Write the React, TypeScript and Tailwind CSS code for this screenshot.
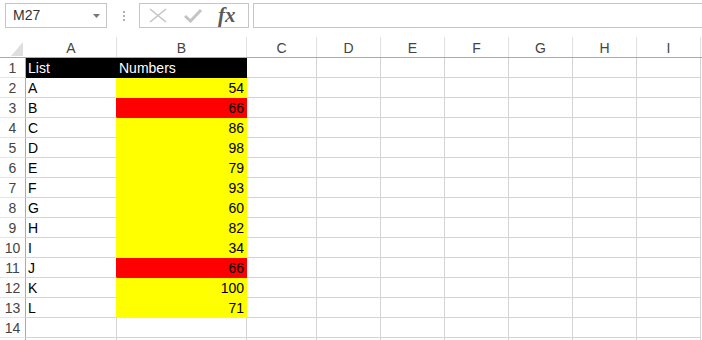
import React from 'react';
import clsx from 'clsx';

type Fill = 'none' | 'black' | 'yellow' | 'red';

const COLS = [
    { label: 'A', w: 'w-[91px]' },
    { label: 'B', w: 'w-[130px]' },
    { label: 'C', w: 'w-[70px]' },
    { label: 'D', w: 'w-[64px]' },
    { label: 'E', w: 'w-[64px]' },
    { label: 'F', w: 'w-[64px]' },
    { label: 'G', w: 'w-[64px]' },
    { label: 'H', w: 'w-[64px]' },
    { label: 'I', w: 'w-[64px]' },
];

const DATA: { name: string; value: number; fill: Fill }[] = [
    { name: 'A', value: 54, fill: 'yellow' },
    { name: 'B', value: 66, fill: 'red' },
    { name: 'C', value: 86, fill: 'yellow' },
    { name: 'D', value: 98, fill: 'yellow' },
    { name: 'E', value: 79, fill: 'yellow' },
    { name: 'F', value: 93, fill: 'yellow' },
    { name: 'G', value: 60, fill: 'yellow' },
    { name: 'H', value: 82, fill: 'yellow' },
    { name: 'I', value: 34, fill: 'yellow' },
    { name: 'J', value: 66, fill: 'red' },
    { name: 'K', value: 100, fill: 'yellow' },
    { name: 'L', value: 71, fill: 'yellow' },
];

const fillClass: Record<Fill, string> = {
    none: 'bg-white border-[#d4d4d4]',
    black: 'bg-black border-black text-white',
    yellow: 'bg-[#ffff00] border-[#ffff00]',
    red: 'bg-[#ff0000] border-[#ff0000]',
};

// right border of column A takes the colour of B's fill so the line looks covered
const edgeClass: Record<Fill, string> = {
    none: 'border-r-[#d4d4d4]',
    black: 'border-r-black',
    yellow: 'border-r-[#ffff00]',
    red: 'border-r-[#ff0000]',
};

function Cell({ w, fill = 'none', right, edge, children }: { w: string; fill?: Fill; right?: boolean; edge?: Fill; children?: React.ReactNode }) {
    return (
        <div
            className={clsx(
                'h-5 shrink-0 box-border border-r border-b flex items-center pt-px leading-[19px] whitespace-nowrap',
                w,
                fillClass[fill],
                edge && edgeClass[edge],
                right ? 'justify-end pr-[2px]' : 'pl-[2px]'
            )}
        >
            {children}
        </div>
    );
}

function RowHeader({ n }: { n?: number }) {
    return (
        <div className="h-5 w-[26px] shrink-0 box-border border-r border-r-[#ababab] border-b border-b-[#e4e4e4] flex items-center justify-center pt-px text-[#444]">
            {n}
        </div>
    );
}

function Row({ n, a, b, fillA = 'none', fillB = 'none', edge }: { n?: number; a?: string; b?: string | number; fillA?: Fill; fillB?: Fill; edge?: Fill }) {
    return (
        <div className="flex">
            <RowHeader n={n} />
            <Cell w="w-[91px]" fill={fillA} edge={edge}>{a}</Cell>
            <Cell w="w-[130px]" fill={fillB} right={fillB !== 'black'}>{b}</Cell>
            {COLS.slice(2).map((c) => (
                <Cell key={c.label} w={c.w} />
            ))}
        </div>
    );
}

export default function App() {
    return (
        <div className="w-[702px] h-[340px] overflow-hidden bg-white text-[14px] text-black" style={{ fontFamily: '"Liberation Sans", Arial, sans-serif' }}>
            {/* Formula bar */}
            <div className="h-[37px] flex items-start pt-[3px] pl-[5px]">
                <div className="w-[102px] h-[25px] box-border border border-[#c6c6c6] flex items-center justify-between pl-[7px] pr-[6px] text-[#333]">
                    <span>M27</span>
                    <svg width="7" height="4" viewBox="0 0 7 4"><path d="M0 0h7L3.5 4z" fill="#777" /></svg>
                </div>
                <div className="w-[32px] h-[25px] flex flex-col items-center justify-center gap-[2px] pl-[1px]">
                    <div className="w-[2px] h-[2px] bg-[#b0b0b0]" />
                    <div className="w-[2px] h-[2px] bg-[#b0b0b0]" />
                    <div className="w-[2px] h-[2px] bg-[#b0b0b0]" />
                </div>
                <div className="w-[110px] h-[25px] box-border border border-[#c6c6c6] flex items-center">
                    <svg className="ml-[8px]" width="20" height="15" viewBox="0 0 20 15">
                        <path d="M2 1L18 14M18 1L2 14" stroke="#c4c4c4" strokeWidth="1.6" />
                    </svg>
                    <svg className="ml-[15px]" width="20" height="15" viewBox="0 0 20 15">
                        <path d="M2 8L7.5 13L18 2" stroke="#c4c4c4" strokeWidth="3" fill="none" />
                    </svg>
                    <span className="ml-[15px] text-[21px] italic font-bold text-[#5a5a5a] leading-none" style={{ fontFamily: '"Liberation Serif", "Times New Roman", serif' }}>
                        fx
                    </span>
                </div>
                <div className="ml-[4px] flex-1 h-[25px] box-border border border-r-0 border-[#c6c6c6]" />
            </div>

            {/* Column headers */}
            <div className="flex h-[21px] box-border border-b border-[#ababab]">
                <div className="w-[26px] shrink-0 relative">
                    <svg className="absolute left-[11px] top-[5px]" width="12" height="14" viewBox="0 0 12 14">
                        <path d="M0 14H12V0z" fill="#dedede" />
                    </svg>
                </div>
                {COLS.map((c) => (
                    <div key={c.label} className={clsx('shrink-0 box-border border-r border-[#e1e1e1] flex items-center justify-center pt-[2px] text-[#444]', c.w)}>
                        {c.label}
                    </div>
                ))}
            </div>

            {/* Grid */}
            <Row n={1} a="List" b="Numbers" fillA="black" fillB="black" edge="black" />
            {DATA.map((d, i) => (
                <Row key={d.name} n={i + 2} a={d.name} b={d.value} fillB={d.fill} edge={d.fill} />
            ))}
            <Row n={14} />
            <Row />
        </div>
    );
}
